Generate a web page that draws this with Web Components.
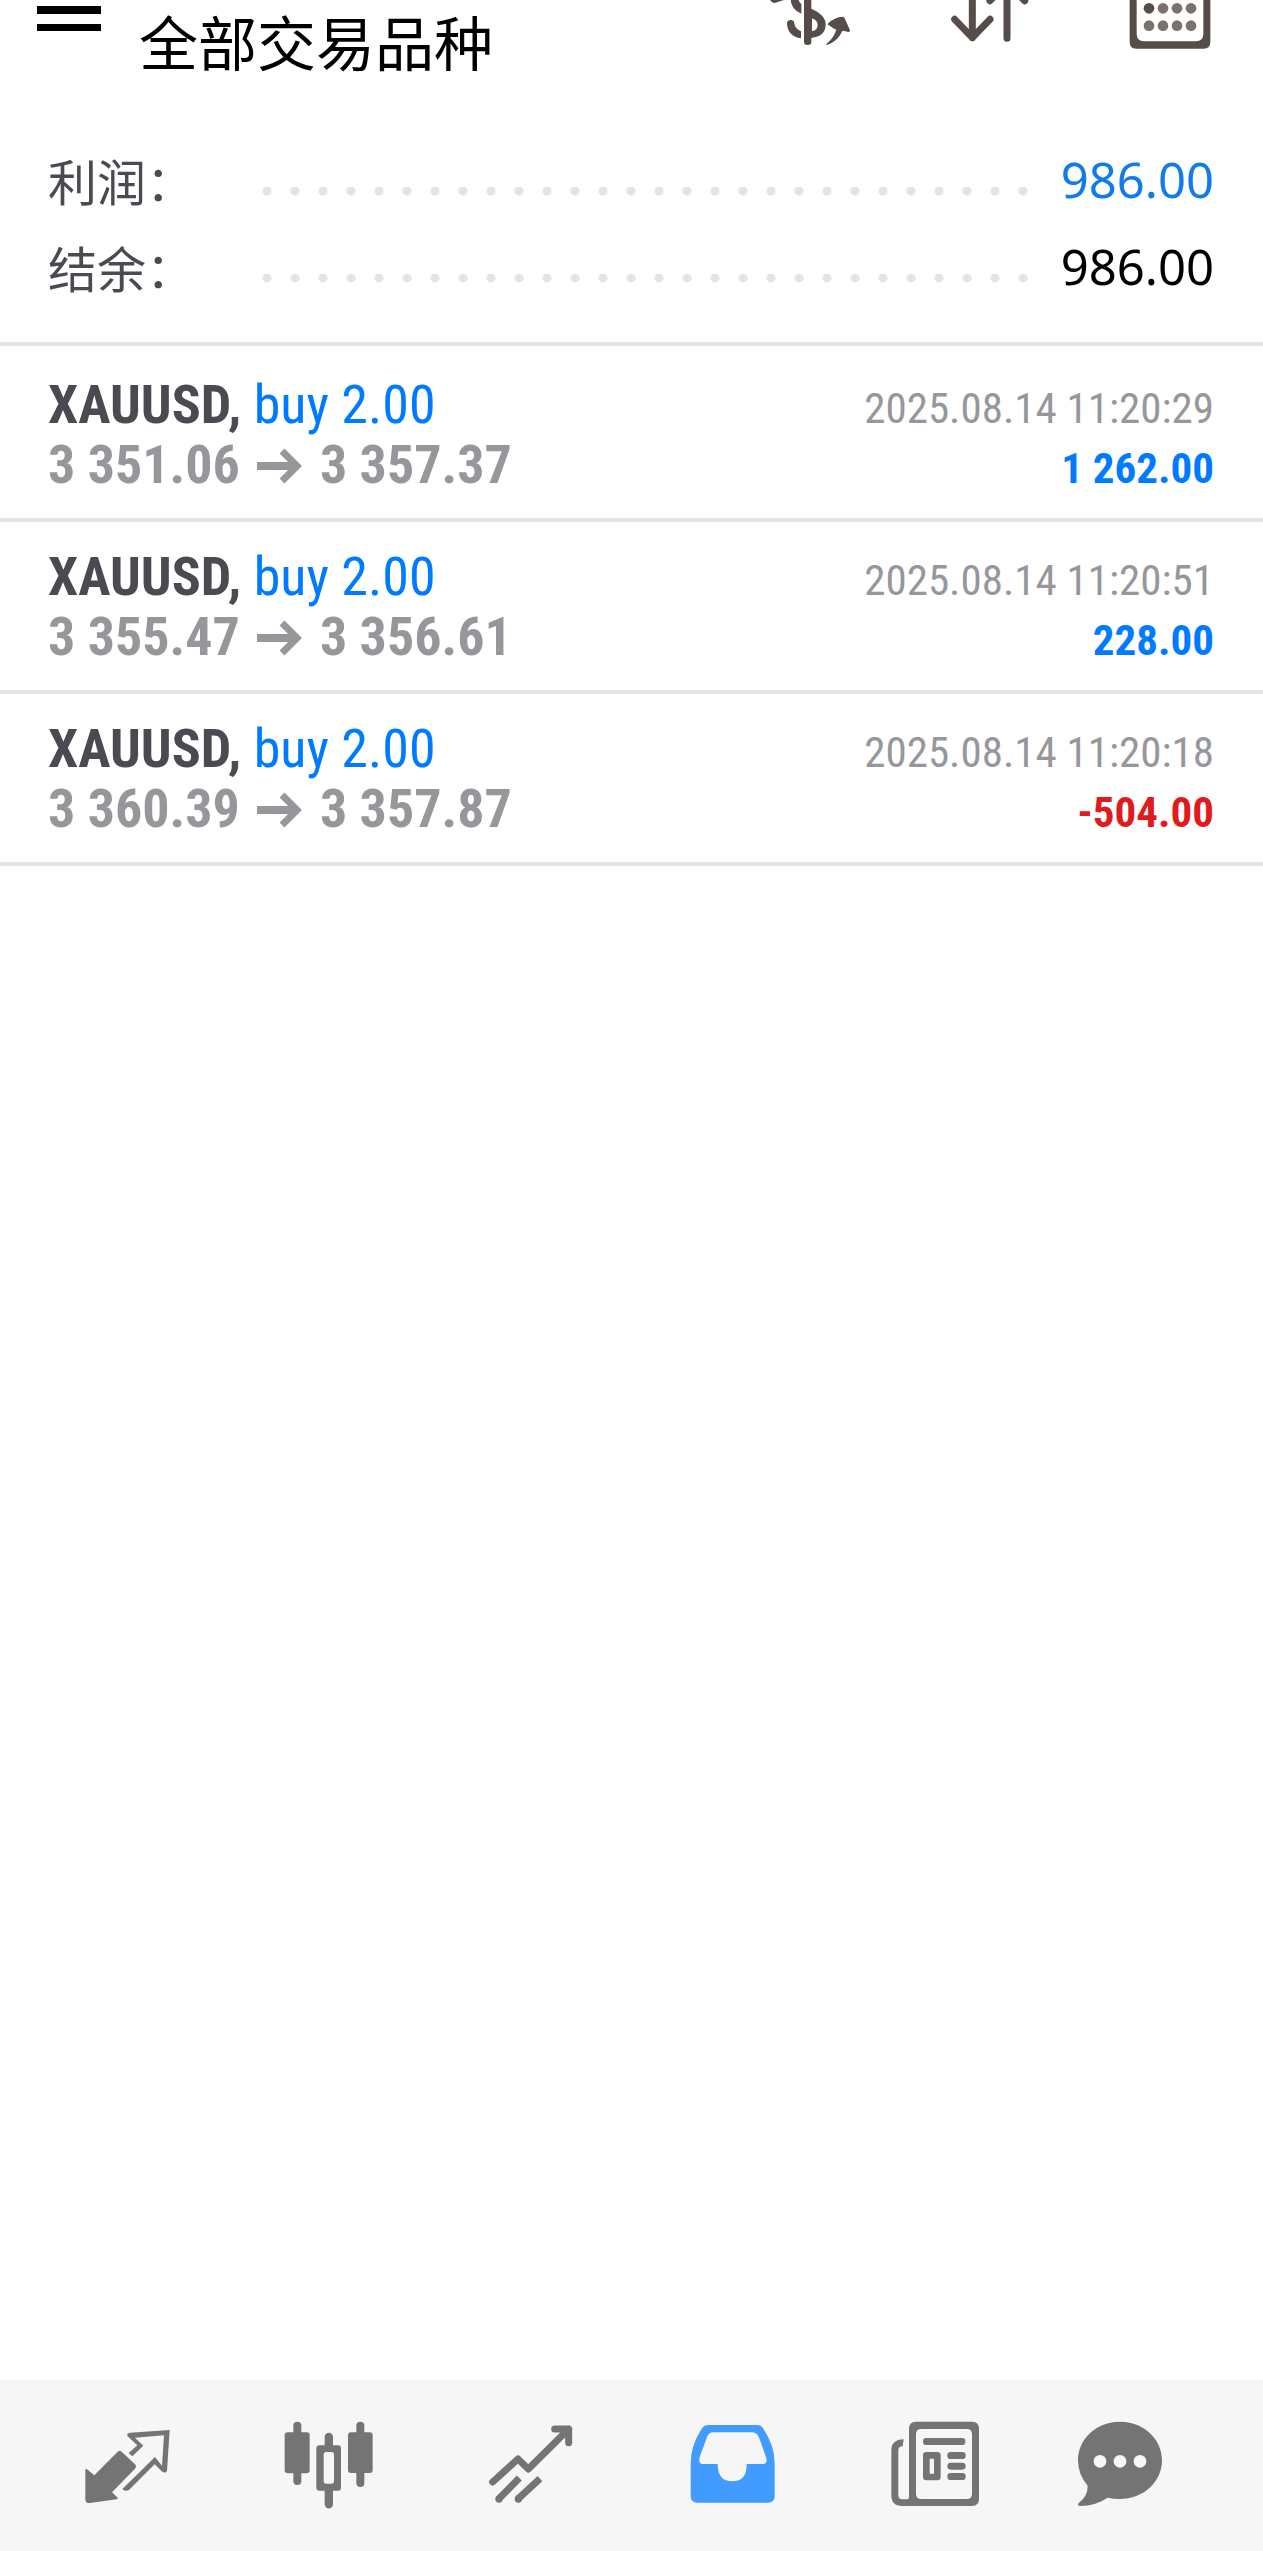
<!DOCTYPE html>
<html lang="zh-CN">
<head>
<meta charset="utf-8">
<meta name="viewport" content="width=device-width, initial-scale=1">
<title>全部交易品种</title>
<style>
  html, body { margin: 0; }
  body {
    background: #fff;
    font-family: "Noto Sans", "Noto Sans CJK SC", sans-serif;
    --ink: #4b4a51;
    --muted: #96979b;
    --blue: #007aff;
    --red: #e01b1e;
    --line: #e4e4e4;
    --condensed: "Roboto Condensed", "Liberation Sans Narrow", "Roboto", sans-serif;
  }
</style>
</head>
<body>
<history-app></history-app>
<script>
const define = (name, html, setup) => {
  const template = document.createElement('template');
  template.innerHTML = html;
  customElements.define(name, class extends HTMLElement {
    constructor() {
      super();
      this.attachShadow({ mode: 'open' }).append(template.content.cloneNode(true));
    }
    connectedCallback() {
      if (setup) setup(this, this.shadowRoot);
    }
  });
};

define('icon-button', `
  <style>
    :host { display: block; }
    button { display: block; width: 100%; margin: 0; padding: 0; border: 0; background: none; color: inherit; cursor: pointer; }
  </style>
  <button type="button"><slot></slot></button>`,
  (el, root) => root.querySelector('button').setAttribute('aria-label', el.getAttribute('label')));

define('top-bar', `
  <style>
    :host { display: flex; align-items: flex-start; height: 88px; padding: 0 3px 0 37px; box-sizing: border-box; color: #564c49; }
    .menu { width: 64px; color: #000; }
    h1 { flex: 1; margin: 0 0 0 38px; font: 400 59px/82px "Noto Sans CJK SC", sans-serif; color: #000; }
    .action { width: 180px; }
    svg { display: block; margin: 0 auto; }
  </style>
  <icon-button class="menu" label="菜单">
    <svg width="64" height="40" viewBox="0 0 64 40" fill="currentColor"><path d="M0 6h64v8H0zM0 24h64v7H0z"/></svg>
  </icon-button>
  <h1><slot></slot></h1>
  <icon-button class="action" label="品种">
    <svg width="120" height="60" viewBox="30 0 360 180" fill="currentColor">
      <path d="M90 0h42q-14 4-28 9-8 1-14-9z"/>
      <path d="M152 0h24q1 8 8 12v29q-30-12-32-41z"/>
      <path d="M141 71a11 11 0 0 1 22 0q2 14 20 23v21q-40-7-42-44z"/>
      <path d="M192 0h22v26q43 19 43 47 0 36-43 41v12q0 9-11 9t-11-9z"/>
      <path d="M216 55v38q17-2 17-19 0-12-17-19z" fill="#fff"/>
      <path d="M263 71q21-20 45-21 4 0 6 5l16 36q1 6-6 5-9-4-17-3-14 31-46 42-3 0-2-3 22-18 30-43-10-3-22-13-5-2-4-5z"/>
    </svg>
  </icon-button>
  <icon-button class="action" label="排序">
    <svg width="120" height="60" viewBox="570 0 360 180" fill="none" stroke="currentColor" stroke-width="21" stroke-linecap="round" stroke-linejoin="round">
      <path d="M697-20V113M644 58l53 55 53-55M801-40V115M750 2l51-53 53 53"/>
    </svg>
  </icon-button>
  <icon-button class="action" label="日期">
    <svg width="120" height="60" viewBox="1110 0 360 180" fill="currentColor">
      <path d="M1169-30h242V126q0 20-20 20h-202q-20 0-20-20zM1190-30V102q0 22 22 22h156q22 0 22-22V-30z" fill-rule="evenodd"/>
      <circle cx="1227" cy="25" r="16"/>
      <g fill="#7b716d"><circle cx="1269" cy="25" r="16"/><circle cx="1311" cy="25" r="16"/><circle cx="1353" cy="25" r="16"/>
      <circle cx="1227" cy="77" r="16"/><circle cx="1269" cy="77" r="16"/><circle cx="1311" cy="77" r="16"/><circle cx="1353" cy="77" r="16"/></g>
    </svg>
  </icon-button>`);

define('summary-row', `
  <style>
    :host { display: flex; align-items: center; height: 87px; font-size: 49px; line-height: 87px; color: #000; }
    .label { width: 214px; color: var(--ink); font-family: "Noto Sans CJK SC", sans-serif; }
    .dots { flex: 1; height: 9px; margin: 23px 31px 0 0; background: radial-gradient(circle at 5px 4px, var(--line) 4px, transparent 5px) 0 0 / 28px 9px repeat-x; }
    .value { color: inherit; }
  </style>
  <span class="label"><slot name="label"></slot></span>
  <span class="dots"></span>
  <span class="value"><slot></slot></span>`);

define('deal-row', `
  <style>
    :host { display: grid; grid-template: 60px 60px / 1fr auto; align-items: baseline; padding: 25px 49px 23px 48px; border-bottom: 4px solid var(--line); font-family: var(--condensed); font-size: 54px; line-height: 60px; white-space: nowrap; color: var(--muted); }
    .head { color: var(--blue); }
    b { color: var(--ink); }
    .prices { display: flex; align-items: center; gap: 17px; font-weight: 700; }
    .time, .profit { font-size: 43px; line-height: 48px; text-align: right; }
    .profit { font-weight: 700; color: var(--blue); }
    :host([loss]) .profit { color: var(--red); }
    svg { display: block; margin-top: 2px; }
  </style>
  <div class="head"><b><slot name="symbol"></slot>,</b> <slot name="volume"></slot></div>
  <div class="time"><slot name="time"></slot></div>
  <div class="prices"><slot name="open"></slot>
    <svg width="46" height="36" viewBox="0 0 46 36" fill="none" stroke="currentColor"><path d="M0 18H41" stroke-width="8"/><path d="M25 3L40 18 25 33" stroke-width="7"/></svg>
    <slot name="close"></slot></div>
  <div class="profit"><slot name="profit"></slot></div>`);

define('nav-item', `
  <style>
    :host { flex: 1; display: block; color: #747474; }
    :host([active]) { color: #429bff; }
    a { display: block; padding: 25px 0 26px; color: inherit; }
    ::slotted(svg) { display: block; width: 120px; height: 120px; margin: 0 auto; }
  </style>
  <a href="#"><slot></slot></a>`,
  (el, root) => root.querySelector('a').setAttribute('aria-label', el.getAttribute('label')));

define('bottom-nav', `
  <style>
    :host { display: block; background: #f6f6f6; }
    nav { display: flex; padding: 0 26px; }
  </style>
  <nav>
    <nav-item label="行情">
      <svg viewBox="201 105 360 360" fill="currentColor">
        <path d="M256 299q1-4 5-1l22 18 70-71q6-6 12 0l40 38q6 6 0 13l-69 71 15 14q5 5-1 7l-80 11q-14 2-14-13z"/>
        <path d="M509 180L390 188Q378 190 383 199L412 226 386 249 397 259 430 227 405 203 492 196 486 287 465 261 367 357Q374 366 387 360L464 283 485 304Q496 312 501 303z"/>
      </svg>
    </nav-item>
    <nav-item label="图表">
      <svg viewBox="806 105 360 360" fill="currentColor">
        <rect x="879" y="155" width="24" height="190" rx="12"/><rect x="853" y="187" width="75" height="123" rx="9"/>
        <rect x="1068" y="155" width="24" height="196" rx="12"/><rect x="1043" y="187" width="74" height="122" rx="9"/>
        <path d="M973 226v-25a12 12 0 0 1 25 0v25h15q9 0 9 9v118q0 9-9 9h-15v41a12 12 0 0 1-25 0v-41h-16q-9 0-9-9V235q0-9 9-9zM978 246q-8 0-8 8v79q0 8 8 8h15q8 0 8-8v-79q0-8-8-8z" fill-rule="evenodd"/>
      </svg>
    </nav-item>
    <nav-item label="交易">
      <svg viewBox="152 105 360 360" fill="none" stroke="currentColor" stroke-width="21" stroke-linejoin="round">
        <path d="M217 336l76-69 31 30L445 177M403 177h42v41" stroke-linecap="round"/>
        <path d="M297 324l-61 62M359 326l-65 60"/>
        <g fill="currentColor" stroke="none"><circle cx="236" cy="387" r="11"/><circle cx="294" cy="387" r="11"/></g>
      </svg>
    </nav-item>
    <nav-item label="历史" active>
      <svg viewBox="757 105 360 360" fill="currentColor">
        <path d="M866 165h146q12 0 18 10 35 52 35 105v97q0 21-21 21H834q-21 0-21-21v-97q0-53 34-105 7-10 19-10zM881 187q-14 0-19 14-6 18-20 54-4 12-3 17 1 10 12 10h43q0 52 44 52t43-52h46q13 0 14-10 0-6-4-17l-18-50q-6-18-21-18z" fill-rule="evenodd"/>
      </svg>
    </nav-item>
    <nav-item label="新闻">
      <svg viewBox="103 105 360 360" fill="currentColor">
        <path d="M229 155h168q21 0 21 21v211q0 21-21 21H187q-32 0-32-32V241q0-32 37-33l-3 21q-13 0-13 12v135q0 12 12 12h14q6 0 6-6V176q0-21 21-21zM245 177q-16 0-16 16v178q0 16 16 16h136q16 0 16-16V193q0-16-16-16z" fill-rule="evenodd"/>
        <rect x="250" y="204" width="127" height="21" rx="10"/>
        <path d="M260 246h33q10 0 10 10v65q0 10-10 10h-33q-10 0-10-10v-65q0-10 10-10zM270 266v45h13v-45z" fill-rule="evenodd"/>
        <rect x="323" y="246" width="55" height="21" rx="10"/><rect x="323" y="278" width="55" height="21" rx="10"/><rect x="323" y="309" width="55" height="21" rx="10"/>
      </svg>
    </nav-item>
    <nav-item label="消息">
      <svg viewBox="708 105 360 360" fill="currentColor">
        <path d="M840 155c70 0 126 51 126 116s-56 116-126 116q-20 0-37-4-36 24-81 25-13-2-5-10 27-20 26-51-29-33-29-76c0-65 56-116 126-116z"/>
        <g fill="#f6f6f6"><circle cx="780" cy="274" r="19"/><circle cx="840" cy="274" r="19"/><circle cx="900" cy="274" r="19"/></g>
      </svg>
    </nav-item>
  </nav>`);

define('history-app', `
  <style>
    :host { display: flex; flex-direction: column; min-height: 100vh; }
    main { flex: 1; }
    .summary { padding: 48px 49px 32px 48px; border-bottom: 4px solid var(--line); }
    .gain { color: #117be9; }
    .deals { padding-top: 4px; }
  </style>
  <top-bar>全部交易品种</top-bar>
  <main>
    <section class="summary">
      <summary-row class="gain"><span slot="label">利润：</span>986.00</summary-row>
      <summary-row><span slot="label">结余：</span>986.00</summary-row>
    </section>
    <section class="deals">
      <deal-row>
        <span slot="symbol">XAUUSD</span><span slot="volume">buy 2.00</span>
        <span slot="open">3 351.06</span><span slot="close">3 357.37</span>
        <time slot="time">2025.08.14 11:20:29</time><span slot="profit">1 262.00</span>
      </deal-row>
      <deal-row>
        <span slot="symbol">XAUUSD</span><span slot="volume">buy 2.00</span>
        <span slot="open">3 355.47</span><span slot="close">3 356.61</span>
        <time slot="time">2025.08.14 11:20:51</time><span slot="profit">228.00</span>
      </deal-row>
      <deal-row loss>
        <span slot="symbol">XAUUSD</span><span slot="volume">buy 2.00</span>
        <span slot="open">3 360.39</span><span slot="close">3 357.87</span>
        <time slot="time">2025.08.14 11:20:18</time><span slot="profit">-504.00</span>
      </deal-row>
    </section>
  </main>
  <bottom-nav></bottom-nav>`);
</script>
</body>
</html>
